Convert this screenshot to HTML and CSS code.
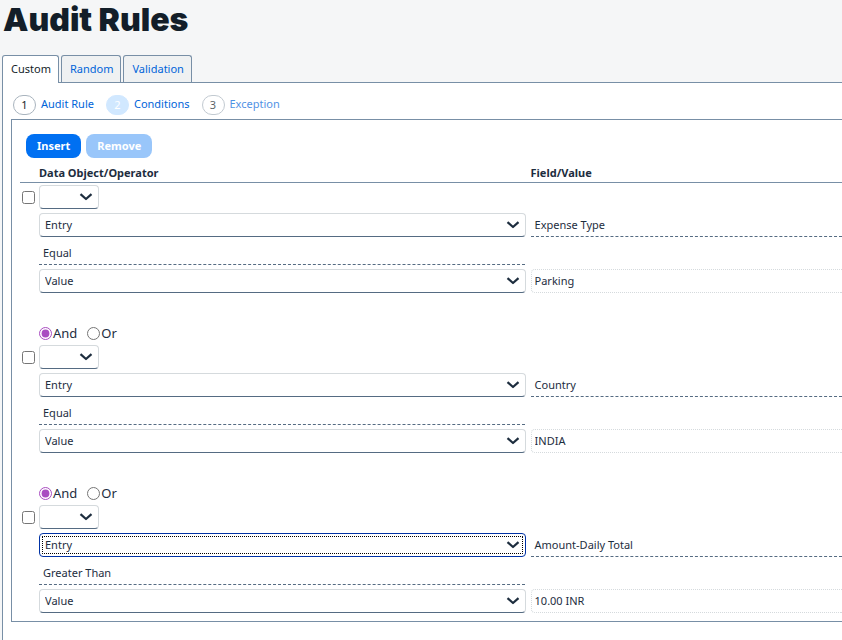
FILE: index.html
```
<!DOCTYPE html>
<html lang="en">
<head>
<meta charset="utf-8">
<title>Audit Rules</title>
<link rel="stylesheet" href="styles.css">
</head>
<body>
<svg class="symbols" aria-hidden="true"><symbol id="chevron" viewBox="0 0 14 8"><path d="M1.5 1.2 L7 6 L12.500 1.200" fill="none" stroke="#1d2d3e" stroke-width="2.200" stroke-linejoin="round"/></symbol></svg>
<h1 class="title">Audit Rules</h1>
<nav class="tabs" aria-label="Rule types">
  <a class="tab active" href="#custom">Custom</a>
  <a class="tab" href="#random">Random</a>
  <a class="tab" href="#validation">Validation</a>
</nav>
<main class="panel">
  <nav class="steps" aria-label="Steps">
    <a class="step" href="#rule"><span class="num">1</span>Audit Rule</a>
    <a class="step current" href="#conditions"><span class="num">2</span>Conditions</a>
    <a class="step upcoming" href="#exception"><span class="num">3</span>Exception</a>
  </nav>
  <form class="box">
    <div class="actions">
      <button class="btn" type="button">Insert</button>
      <button class="btn" type="button" disabled>Remove</button>
    </div>
    <table class="rules">
      <colgroup><col class="col-check"><col class="col-operator"><col></colgroup>
      <thead><tr><td></td><th scope="col">Data Object/Operator</th><th scope="col">Field/Value</th></tr></thead>
      <tbody>
        <tr class="rule">
          <td><div class="stack"><input class="check" type="checkbox" aria-label="Select condition 1"></div></td>
          <td><div class="stack">
            <div class="pick small"><select aria-label="Opening parenthesis 1"><option></option><option>(</option></select><svg class="arrow"><use href="#chevron"/></svg></div>
            <div class="pick"><select aria-label="Data object 1"><option>Entry</option></select><svg class="arrow"><use href="#chevron"/></svg></div>
            <div class="lookup operator">Equal</div>
            <div class="pick"><select aria-label="Compare to 1"><option>Value</option></select><svg class="arrow"><use href="#chevron"/></svg></div>
          </div></td>
          <td><div class="stack fields">
            <div class="lookup">Expense Type</div>
            <input class="value" type="text" value="Parking" aria-label="Value 1" readonly>
          </div></td>
        </tr>
        <tr class="join"><td></td><td colspan="2"><div class="radios">
          <label><input type="radio" name="join1" checked>And</label><label><input type="radio" name="join1">Or</label>
        </div></td></tr>
        <tr class="rule">
          <td><div class="stack"><input class="check" type="checkbox" aria-label="Select condition 2"></div></td>
          <td><div class="stack">
            <div class="pick small"><select aria-label="Opening parenthesis 2"><option></option><option>(</option></select><svg class="arrow"><use href="#chevron"/></svg></div>
            <div class="pick"><select aria-label="Data object 2"><option>Entry</option></select><svg class="arrow"><use href="#chevron"/></svg></div>
            <div class="lookup operator">Equal</div>
            <div class="pick"><select aria-label="Compare to 2"><option>Value</option></select><svg class="arrow"><use href="#chevron"/></svg></div>
          </div></td>
          <td><div class="stack fields">
            <div class="lookup">Country</div>
            <input class="value" type="text" value="INDIA" aria-label="Value 2" readonly>
          </div></td>
        </tr>
        <tr class="join"><td></td><td colspan="2"><div class="radios">
          <label><input type="radio" name="join2" checked>And</label><label><input type="radio" name="join2">Or</label>
        </div></td></tr>
        <tr class="rule">
          <td><div class="stack"><input class="check" type="checkbox" aria-label="Select condition 3"></div></td>
          <td><div class="stack">
            <div class="pick small"><select aria-label="Opening parenthesis 3"><option></option><option>(</option></select><svg class="arrow"><use href="#chevron"/></svg></div>
            <div class="pick focused"><select aria-label="Data object 3"><option>Entry</option></select><svg class="arrow"><use href="#chevron"/></svg></div>
            <div class="lookup operator">Greater Than</div>
            <div class="pick"><select aria-label="Compare to 3"><option>Value</option></select><svg class="arrow"><use href="#chevron"/></svg></div>
          </div></td>
          <td><div class="stack fields">
            <div class="lookup">Amount-Daily Total</div>
            <input class="value" type="text" value="10.00 INR" aria-label="Value 3" readonly>
          </div></td>
        </tr>
      </tbody>
    </table>
  </form>
</main>
</body>
</html>
```
FILE: styles.css
```
* { box-sizing: border-box; }
body {
  margin: 0;
  min-height: 100vh;
  display: flex;
  flex-direction: column;
  background: #f5f6f7;
  color: #1d2d3e;
  font: 11px/16px "Noto Sans", "Open Sans", sans-serif;
}
a { color: #0064d9; text-decoration: none; }
.symbols { display: none; }
.title {
  margin: 0 3px 15px;
  color: #131e29;
  font-family: Inter, "Noto Sans", sans-serif;
  font-size: 32px;
  line-height: 40px;
  font-weight: 900;
}
.tabs { display: flex; gap: 2px; padding-left: 2px; }
.tab {
  height: 27px;
  padding: 5px 7px 5px 8px;
  border: 1px solid #788fa6;
  border-bottom: 0;
  border-radius: 3px 3px 0 0;
  background: #eff1f2;
}
.tab.active {
  height: 28px;
  margin-bottom: -1px;
  background: #fff;
  color: #131e29;
  z-index: 1;
}
.panel {
  flex: 1;
  margin-left: 2px;
  padding: 12px 0 18px 8px;
  border: solid #788fa6;
  border-width: 1px 0 0 1px;
  background: #fff;
}
.steps { display: flex; gap: 12px; padding-left: 2px; }
.step { display: flex; gap: 5px; line-height: 18px; }
.num {
  width: 23px;
  height: 20px;
  border: 1px solid #a9b4be;
  border-radius: 10px;
  color: #131e29;
  text-align: center;
}
.current .num { border-color: #d1e8ff; background: #d1e8ff; color: #fff; }
.upcoming { opacity: .7; }
.box {
  margin-top: 4px;
  padding: 14px 0 8px 8px;
  border: solid #788fa6;
  border-width: 1px 0 1px 1px;
}
.actions { display: flex; gap: 5px; padding-left: 6px; }
.btn {
  height: 24px;
  padding: 0 11px;
  border: 0;
  border-radius: 8px;
  background: #0070f2;
  color: #fff;
  font: bold 11px/16px "Noto Sans", sans-serif;
}
.btn:disabled { background: #99c6fa; }
.rules {
  width: 100%;
  margin-top: 7px;
  border-spacing: 0;
  table-layout: fixed;
}
.col-check { width: 19px; }
.col-operator { width: 59.8%; }
.rules th, .rules td { padding: 0; text-align: left; vertical-align: top; }
.rules thead th, .rules thead td {
  height: 18px;
  border-bottom: 1px solid #788fa6;
}
.stack { display: flex; flex-direction: column; gap: 4px; }
.rule .stack { padding-top: 2px; }
.rule .fields { padding-top: 30px; gap: 32px; }
.check { width: 13px; height: 13px; margin: 6px 2px; }
.pick { display: grid; align-items: center; margin-right: 5px; }
.pick.small { width: 60px; }
.pick select {
  grid-area: 1 / 1;
  width: 100%;
  height: 24px;
  padding: 0 5px;
  border: 1px solid #d5dadd;
  border-bottom-color: #556b82;
  border-radius: 4px;
  appearance: none;
  background: #fff;
  color: #1d2d3e;
  font: inherit;
}
.focused select {
  border-color: #0032a5;
  outline: 1px dotted #000;
  outline-offset: -4px;
}
.arrow {
  grid-area: 1 / 1;
  justify-self: end;
  width: 14px;
  height: 8px;
  margin-right: 6px;
  pointer-events: none;
}
.lookup {
  height: 24px;
  padding: 4px;
  border-bottom: 1px dashed #556b82;
}
.operator { margin-right: 6px; }
.value {
  width: 100%;
  height: 24px;
  padding: 0 3px 1px;
  border: 1px dotted #d5dadd;
  border-right: 0;
  border-radius: 4px 0 0 4px;
  background: #fff;
  color: #1d2d3e;
  font: inherit;
}
.radios {
  display: flex;
  gap: 10px;
  height: 50px;
  padding-top: 30px;
  font-size: 13px;
  line-height: 22px;
}
.radios label { display: flex; align-items: center; gap: 1px; }
.radios input { width: 13px; height: 13px; margin: 0; accent-color: #a94dc1; }
```
